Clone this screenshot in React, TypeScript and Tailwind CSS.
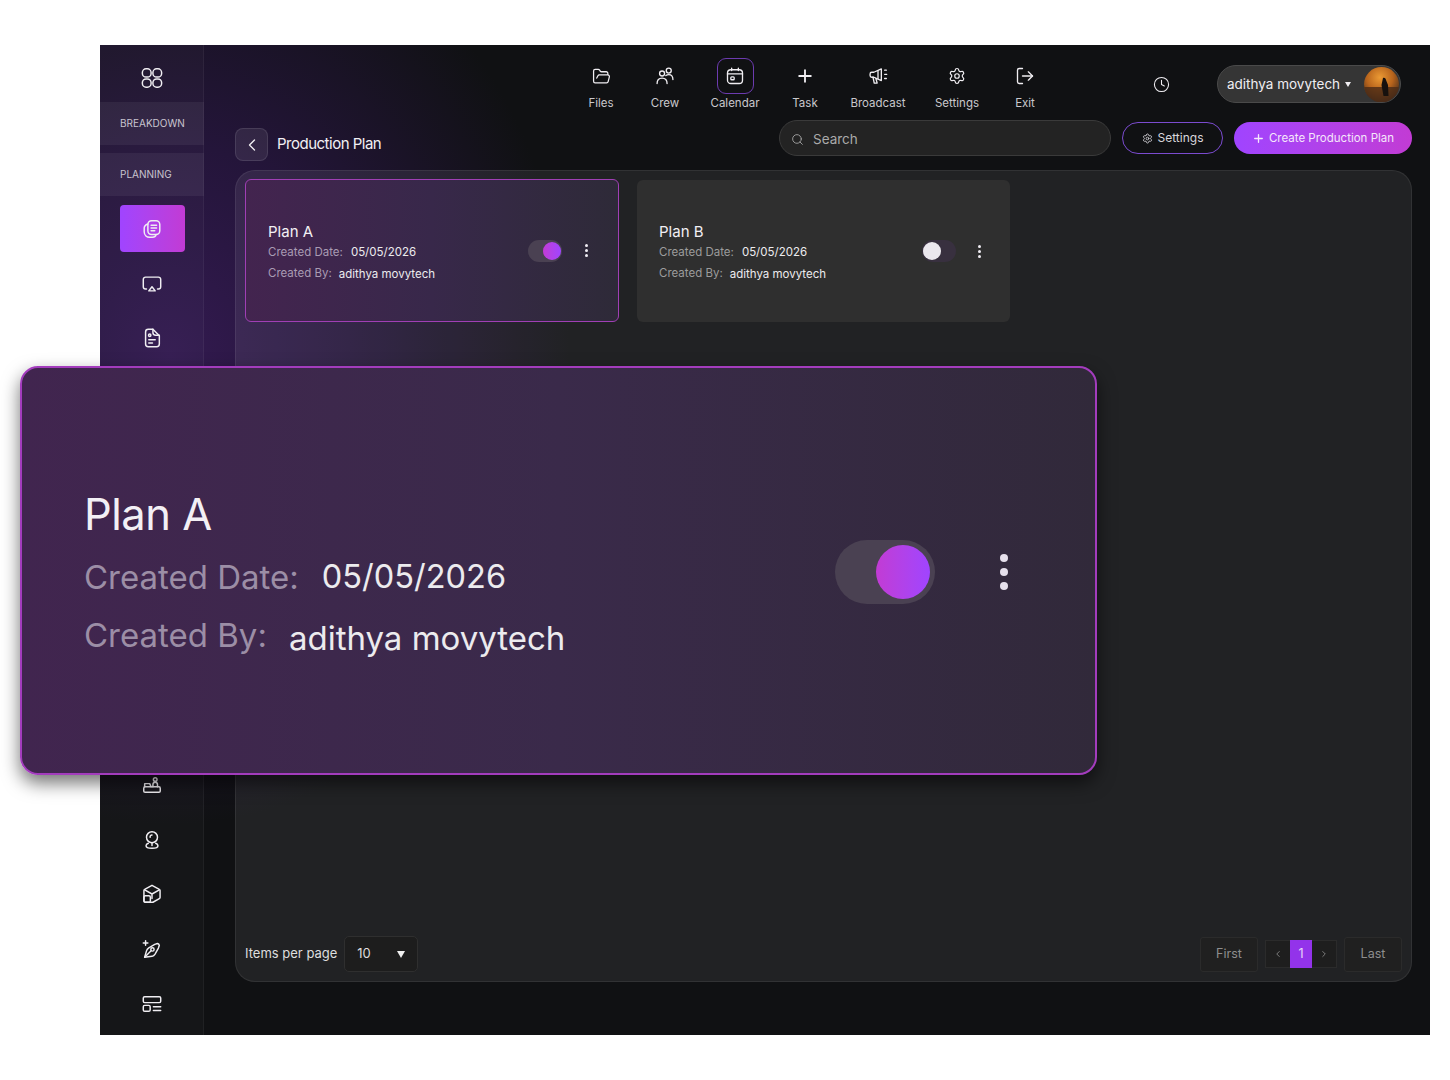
import { ChevronLeft, ChevronRight, Clock, FolderOpen, LogOut, Plus, Search, Settings } from 'lucide-react';
import type { ReactNode } from 'react';

function Ico({ children, size = 22 }: { children: ReactNode; size?: number }) {
  return (
    <svg width={size} height={size} viewBox="0 0 24 24" fill="none" stroke="currentColor" strokeWidth="1.6" strokeLinecap="round" strokeLinejoin="round">
      {children}
    </svg>
  );
}

const GridIcon = () => (
  <Ico>
    <rect x="1.500" y="2" width="9.500" height="9" rx="4" />
    <rect x="13" y="2" width="9.500" height="9" rx="4" />
    <rect x="1.500" y="13" width="9.500" height="9" rx="4" />
    <rect x="13" y="13" width="9.500" height="9" rx="4" />
  </Ico>
);

const NotesIcon = () => (
  <Ico>
    <rect x="7.500" y="3" width="13" height="15" rx="4" />
    <path d="M11 8h6M11 11h6M11 14h4" />
    <path d="M7.500 6.500C4.500 7.500 3.500 9 3.500 11v4c0 4 3 6 6 6h3c2 0 3.500-1 4-3" />
  </Ico>
);

const ScreenIcon = () => (
  <Ico>
    <path d="M6 17.500H5a2.500 2.500 0 0 1-2.500-2.500V7A2.500 2.500 0 0 1 5 4.500h14A2.500 2.500 0 0 1 21.500 7v8a2.500 2.500 0 0 1-2.500 2.500h-1" />
    <path d="M12 15l3.500 4.500h-7z" />
  </Ico>
);

const DocIcon = () => (
  <Ico>
    <path d="M8 2.500h5l7 7v9a3 3 0 0 1-3 3H8a3 3 0 0 1-3-3v-13a3 3 0 0 1 3-3z" />
    <path d="M13 2.500V6a3 3 0 0 0 3 3h4" />
    <circle cx="9.500" cy="9" r="1.300" />
    <path d="M8.500 14h7M8.500 17.500h4" />
  </Ico>
);

const DeskIcon = () => (
  <Ico>
    <rect x="3" y="14" width="18" height="6" rx="1.500" />
    <path d="M4 14v-3.500h5.500L11 14" />
    <circle cx="15.500" cy="6" r="2" />
    <path d="M13 14v-2.500a2.500 2.500 0 0 1 5 0V14" />
  </Ico>
);

const PinIcon = () => (
  <Ico>
    <circle cx="12" cy="9" r="6" />
    <path d="M10 9a2 2 0 0 1 2-2.500" />
    <path d="M12 15v3" />
    <path d="M8 15.500c-1.500.6-2.500 1.500-2.500 2.700C5.500 20 8.500 21 12 21s6.500-1 6.500-2.800c0-1.200-1-2.100-2.500-2.700" />
  </Ico>
);

const BoxIcon = () => (
  <Ico>
    <path d="M12 2.500l8 4.500a1.500 1.500 0 0 1 .8 1.300v7.400a1.500 1.500 0 0 1-.8 1.300L13 21H5a1.800 1.800 0 0 1-1.800-1.800V8.300A1.500 1.500 0 0 1 4 7z" />
    <path d="M4 7.500l8 4.500 8-4.500M12 12v5" />
    <rect x="3.200" y="14" width="7" height="7" rx="1.500" />
  </Ico>
);

const PenIcon = () => (
  <Ico>
    <path d="M4 21l2-7c.4-1.400 1.300-2.500 2.500-3.300L15 7l3-1c1 .2 1.800 1 2 2l-1 3-3.700 6.500c-.8 1.200-1.900 2.100-3.300 2.500z" />
    <path d="M4 21l7-7" />
    <circle cx="12.500" cy="12.500" r="1.800" />
    <path d="M5 3v5M2.500 5.500h5" />
  </Ico>
);

const LayoutIcon = () => (
  <Ico>
    <rect x="2.500" y="4" width="19" height="6.500" rx="1.500" />
    <rect x="2.500" y="13.500" width="7.500" height="6.500" rx="1.500" />
    <path d="M13.500 15h8M13.500 19h8" />
  </Ico>
);

const CalendarIcon = () => (
  <Ico size={20}>
    <rect x="3" y="4.500" width="18" height="16.500" rx="4" />
    <path d="M3 9.500h18M8 2.500v3M16 2.500v3" />
    <rect x="7" y="13" width="4" height="3.500" rx="1" />
  </Ico>
);

const CrewIcon = () => (
  <Ico size={20}>
    <circle cx="8.500" cy="9" r="3" />
    <circle cx="16.500" cy="5.500" r="3" />
    <path d="M2.500 21c0-4 2.500-6.500 6-6.500s6 2.500 6 6.500" />
    <path d="M13 11.500c1-.8 2.200-1.200 3.500-1.200 3.200 0 5 2.500 5 6" />
  </Ico>
);

const BroadcastIcon = () => (
  <Ico size={20}>
    <path d="M16 3.500L7 7.500H4.500A2 2 0 0 0 2.500 9.500v2A2 2 0 0 0 4.500 13.500H7l9 4z" />
    <path d="M6 13.500l1.500 7h3.500l-1.500-5.500" />
    <path d="M12 5.500v10M20 5h2M20 10h2.500M20 15h2" />
  </Ico>
);

const navItems = [
  { label: 'Files', w: 'w-[60px]', icon: <FolderOpen size={19} strokeWidth={1.6} /> },
  { label: 'Crew', w: 'w-[68px]', icon: <CrewIcon /> },
  { label: 'Calendar', w: 'w-[72px]', icon: <CalendarIcon />, active: true },
  { label: 'Task', w: 'w-[68px]', icon: <Plus size={20} strokeWidth={2.2} /> },
  { label: 'Broadcast', w: 'w-[78px]', icon: <BroadcastIcon /> },
  { label: 'Settings', w: 'w-[80px]', icon: <Settings size={18} strokeWidth={1.6} /> },
  { label: 'Exit', w: 'w-[56px]', icon: <LogOut size={20} strokeWidth={1.6} /> },
];

function Toggle({ on }: { on: boolean }) {
  if (on) {
    return (
      <div className="flex h-[22px] w-[34px] items-center justify-end rounded-full bg-[#4a4152]">
        <div className="mr-[1px] h-[18px] w-[18px] rounded-full bg-gradient-to-r from-[#c23bd4] to-[#a044ff]" />
      </div>
    );
  }
  return (
    <div className="flex h-[22px] w-[34px] items-center rounded-full bg-[#38303f]">
      <div className="ml-[1px] h-[18px] w-[18px] rounded-full bg-[#ebe8ee]" />
    </div>
  );
}

function Dots({ size = 'small' }: { size?: 'small' | 'big' }) {
  const dot = size === 'big' ? 'h-[8px] w-[8px] rounded-full bg-[#e6e0ec]' : 'h-[3px] w-[3px] rounded-full bg-[#f0edf3]';
  return (
    <div className={size === 'big' ? 'flex flex-col gap-[6px]' : 'flex flex-col gap-[2px]'}>
      <div className={dot} />
      <div className={dot} />
      <div className={dot} />
    </div>
  );
}

function PlanCard({ title, active }: { title: string; active?: boolean }) {
  return (
    <div
      className={
        active
          ? 'flex h-[143px] w-[374px] items-center rounded-[6px] border border-[#a03fb5] bg-gradient-to-r from-[#43244f] via-[#38284a] to-[#2e2a38] pl-[22px] pr-[30px]'
          : 'mt-[1px] flex h-[142px] w-[373px] items-center rounded-[6px] bg-[#2f2f2f] pl-[22px] pr-[29px]'
      }
    >
      <div className={active ? 'flex-1 pt-[5px]' : 'flex-1 pt-[4px]'}>
        <div className="text-[15px] leading-[20px] text-[#f2f0f4]">{title}</div>
        <div className="mt-[1px] flex h-[20px] items-center text-[11.500px]">
          <span className={active ? 'text-[#a99bb3]' : 'text-[#9c9c9c]'}>Created Date:</span>
          <span className="ml-[8px] text-[#ecebee]">05/05/2026</span>
        </div>
        <div className="mt-[1px] flex h-[20px] items-center text-[11.500px]">
          <span className={active ? 'text-[#a99bb3]' : 'text-[#9c9c9c]'}>Created By:</span>
          <span className="ml-[7px] mt-[1px] text-[#ecebee]">adithya movytech</span>
        </div>
      </div>
      <Toggle on={!!active} />
      <div className={active ? 'ml-[23px]' : 'ml-[22px]'}>
        <Dots />
      </div>
    </div>
  );
}

export default function App() {
  return (
    <div className="relative h-[1080px] w-[1450px] overflow-hidden bg-white pl-[100px] pr-[20px] pt-[45px] font-['Inter',sans-serif]">
      <div className="flex h-[990px] bg-[#101113] bg-[radial-gradient(ellipse_400px_470px_at_70px_310px,#331a50_0%,#24153a_45%,transparent_100%)]">
        {/* sidebar */}
        <aside className="flex w-[104px] shrink-0 flex-col items-center bg-white/[0.025] text-[#f0eef2] shadow-[inset_-1px_0_0_rgba(255,255,255,0.05)]">
          <div className="flex h-[57px] w-full shrink-0 items-center justify-center pt-[8px]">
            <GridIcon />
          </div>
          <div className="flex h-[43px] w-full shrink-0 items-center bg-white/[0.06] pl-[20px] text-[10px] text-[#c9c5cf]">BREAKDOWN</div>
          <div className="mt-[8px] flex h-[43px] w-full shrink-0 items-center bg-white/[0.06] pl-[20px] text-[10px] text-[#c9c5cf]">PLANNING</div>
          <div className="mt-[9px] flex h-[47px] w-[65px] shrink-0 items-center justify-center rounded-[4px] bg-gradient-to-r from-[#a044ff] to-[#c23bd4]">
            <NotesIcon />
          </div>
          <div className="mt-[5px] flex h-[54px] shrink-0 items-center"><ScreenIcon /></div>
          <div className="flex h-[54px] shrink-0 items-center"><DocIcon /></div>
          <div className="h-[392px] shrink-0" />
          <div className="flex h-[55px] shrink-0 items-center"><DeskIcon /></div>
          <div className="flex h-[55px] shrink-0 items-center"><PinIcon /></div>
          <div className="flex h-[54px] shrink-0 items-center"><BoxIcon /></div>
          <div className="flex h-[56px] shrink-0 items-center"><PenIcon /></div>
          <div className="flex h-[54px] shrink-0 items-center"><LayoutIcon /></div>
        </aside>

        <main className="min-w-0 flex-1 pl-[31px] pr-[18px]">
          {/* top nav */}
          <div className="flex h-[75px] items-start">
            <nav className="ml-[336px] mt-[13px] flex">
              {navItems.map((item) => (
                <div key={item.label} className={`${item.w} flex flex-col items-center text-[#f0eef2]`}>
                  <div className={item.active ? 'flex h-[36px] w-[37px] items-center justify-center rounded-[9px] border border-[#6c3bb0]' : 'flex h-[36px] w-[37px] items-center justify-center'}>
                    {item.icon}
                  </div>
                  <span className="whitespace-nowrap text-[11.500px] leading-[18px] text-[#c9c8cc]">{item.label}</span>
                </div>
              ))}
            </nav>
            <div className="ml-[100px] mt-[31px] text-[#f0eef2]">
              <Clock size={17} strokeWidth={1.5} />
            </div>
            <div className="ml-[47px] mt-[20px] flex h-[38px] w-[184px] items-center rounded-full border border-[#4a4a4a] bg-[#353535] pl-[9px] pr-[1px]">
              <span className="whitespace-nowrap text-[13.500px] text-[#f0eef2]">adithya movytech</span>
              <span className="ml-[5px] h-0 w-0 border-x-[3.500px] border-t-[5px] border-x-transparent border-t-[#f0eef2]" />
              <svg className="ml-auto" width="35" height="35" viewBox="0 0 35 35">
                <defs>
                  <radialGradient id="sun" cx="0.45" cy="0.3" r="0.75">
                    <stop offset="0" stopColor="#eb9a34" />
                    <stop offset="0.5" stopColor="#b8641c" />
                    <stop offset="1" stopColor="#33241c" />
                  </radialGradient>
                </defs>
                <circle cx="17.500" cy="17.500" r="17.500" fill="url(#sun)" />
                <path d="M0 20h35v-2a17.500 17.500 0 0 1-35 0z" fill="#4a2a16" opacity="0.8" />
                <path d="M19 11c1.500-1 3 .5 3 2l2 5 .5 11h-5l-2-11z" fill="#17110e" />
              </svg>
            </div>
          </div>

          {/* title row */}
          <div className="flex h-[40px] items-start">
            <div className="mt-[8px] flex h-[33px] w-[33px] items-center justify-center rounded-[8px] border border-white/10 bg-white/[0.08] text-[#f0eef2]">
              <ChevronLeft size={20} strokeWidth={1.6} />
            </div>
            <h1 className="ml-[9px] mt-[14px] whitespace-nowrap text-[15px] font-normal leading-[20px] tracking-[-0.5px] text-[#f2f0f4]">Production Plan</h1>
            <div className="ml-auto flex items-start gap-[11px]">
              <div className="flex h-[36px] w-[332px] items-center rounded-full border border-[#3a3a3a] bg-[#232323] pl-[11px] pt-[2px]">
                <Search size={13} strokeWidth={1.6} className="text-[#a9a9a9]" />
                <span className="ml-[9px] text-[13.500px] text-[#aaaaaa]">Search</span>
              </div>
              <div className="mt-[2px] flex h-[32px] w-[101px] items-center justify-center gap-[5px] rounded-full border border-[#7b4bd0] text-[#d8d6dc]">
                <Settings size={11} strokeWidth={1.8} />
                <span className="text-[12px]">Settings</span>
              </div>
              <div className="mt-[2px] flex h-[32px] w-[178px] items-center justify-center gap-[4px] rounded-full bg-gradient-to-r from-[#a044ff] to-[#c23bd4] pt-[1px] text-[#f5e6fb]">
                <Plus size={13} strokeWidth={2.4} />
                <span className="whitespace-nowrap text-[11.500px]">Create Production Plan</span>
              </div>
            </div>
          </div>

          {/* panel */}
          <section className="mt-[10px] flex h-[812px] flex-col justify-between rounded-[20px] border border-white/[0.07] bg-white/[0.075] px-[9px] pb-[9px] pt-[8px]">
            <div className="flex gap-[18px]">
              <PlanCard title="Plan A" active />
              <PlanCard title="Plan B" />
            </div>
            <div className="flex items-center justify-between">
              <div className="flex items-center">
                <span className="text-[13px] text-[#dedede]">Items per page</span>
                <div className="ml-[7px] flex h-[36px] w-[74px] items-center justify-between rounded-[5px] border border-[#2f2f2f] bg-[#1d1d1d] pl-[12px] pr-[12px]">
                  <span className="text-[13px] text-[#dedede]">10</span>
                  <span className="h-0 w-0 border-x-[4px] border-t-[7px] border-x-transparent border-t-[#f0f0f0]" />
                </div>
              </div>
              <div className="flex items-center text-[#8e8e8e]">
                <div className="flex h-[35px] w-[58px] items-center justify-center rounded-[3px] border border-[#2b2b2b] bg-[#202020] text-[12.500px]">First</div>
                <div className="ml-[7px] flex h-[28px] items-center border border-[#2b2b2b] bg-[#1e1e1e]">
                  <div className="flex w-[24px] justify-center"><ChevronLeft size={10} /></div>
                  <div className="flex h-[28px] w-[22px] items-center justify-center bg-[#9333ea] text-[12.500px] text-[#e8d8f8]">1</div>
                  <div className="flex w-[24px] justify-center"><ChevronRight size={10} /></div>
                </div>
                <div className="ml-[7px] flex h-[35px] w-[58px] items-center justify-center rounded-[3px] border border-[#2b2b2b] bg-[#202020] text-[12.500px]">Last</div>
              </div>
            </div>
          </section>
        </main>
      </div>

      {/* zoomed-in callout of the Plan A card */}
      <div className="absolute left-[20px] top-[366px] flex h-[409px] w-[1077px] items-center rounded-[18px] border-2 border-[#a33cbd] bg-gradient-to-r from-[#41254f] via-[#3a2a4a] to-[#31293a] pl-[62px] pr-[87px] shadow-[0_8px_18px_rgba(0,0,0,0.55)]">
        <div className="flex-1 pt-[3px]">
          <div className="text-[43.500px] leading-[54px] tracking-[-0.5px] text-[#f3f0f5]">Plan A</div>
          <div className="mt-[15px] flex h-[44px] items-center">
            <span className="text-[33px] text-[#9c8ea6]">Created Date:</span>
            <span className="ml-[23px] text-[32.500px] text-[#ecebee]">05/05/2026</span>
          </div>
          <div className="mt-[14px] flex h-[44px] items-center text-[33px]">
            <span className="text-[#9c8ea6]">Created By:</span>
            <span className="ml-[22px] mt-[6px] text-[#ecebee]">adithya movytech</span>
          </div>
        </div>
        <div className="mt-[2px] flex h-[64px] w-[100px] items-center justify-end rounded-full bg-[#4a4152] pr-[5px]">
          <div className="h-[54px] w-[54px] rounded-full bg-gradient-to-r from-[#c23bd4] to-[#a044ff]" />
        </div>
        <div className="ml-[65px] mt-[2px]">
          <Dots size="big" />
        </div>
      </div>
    </div>
  );
}
